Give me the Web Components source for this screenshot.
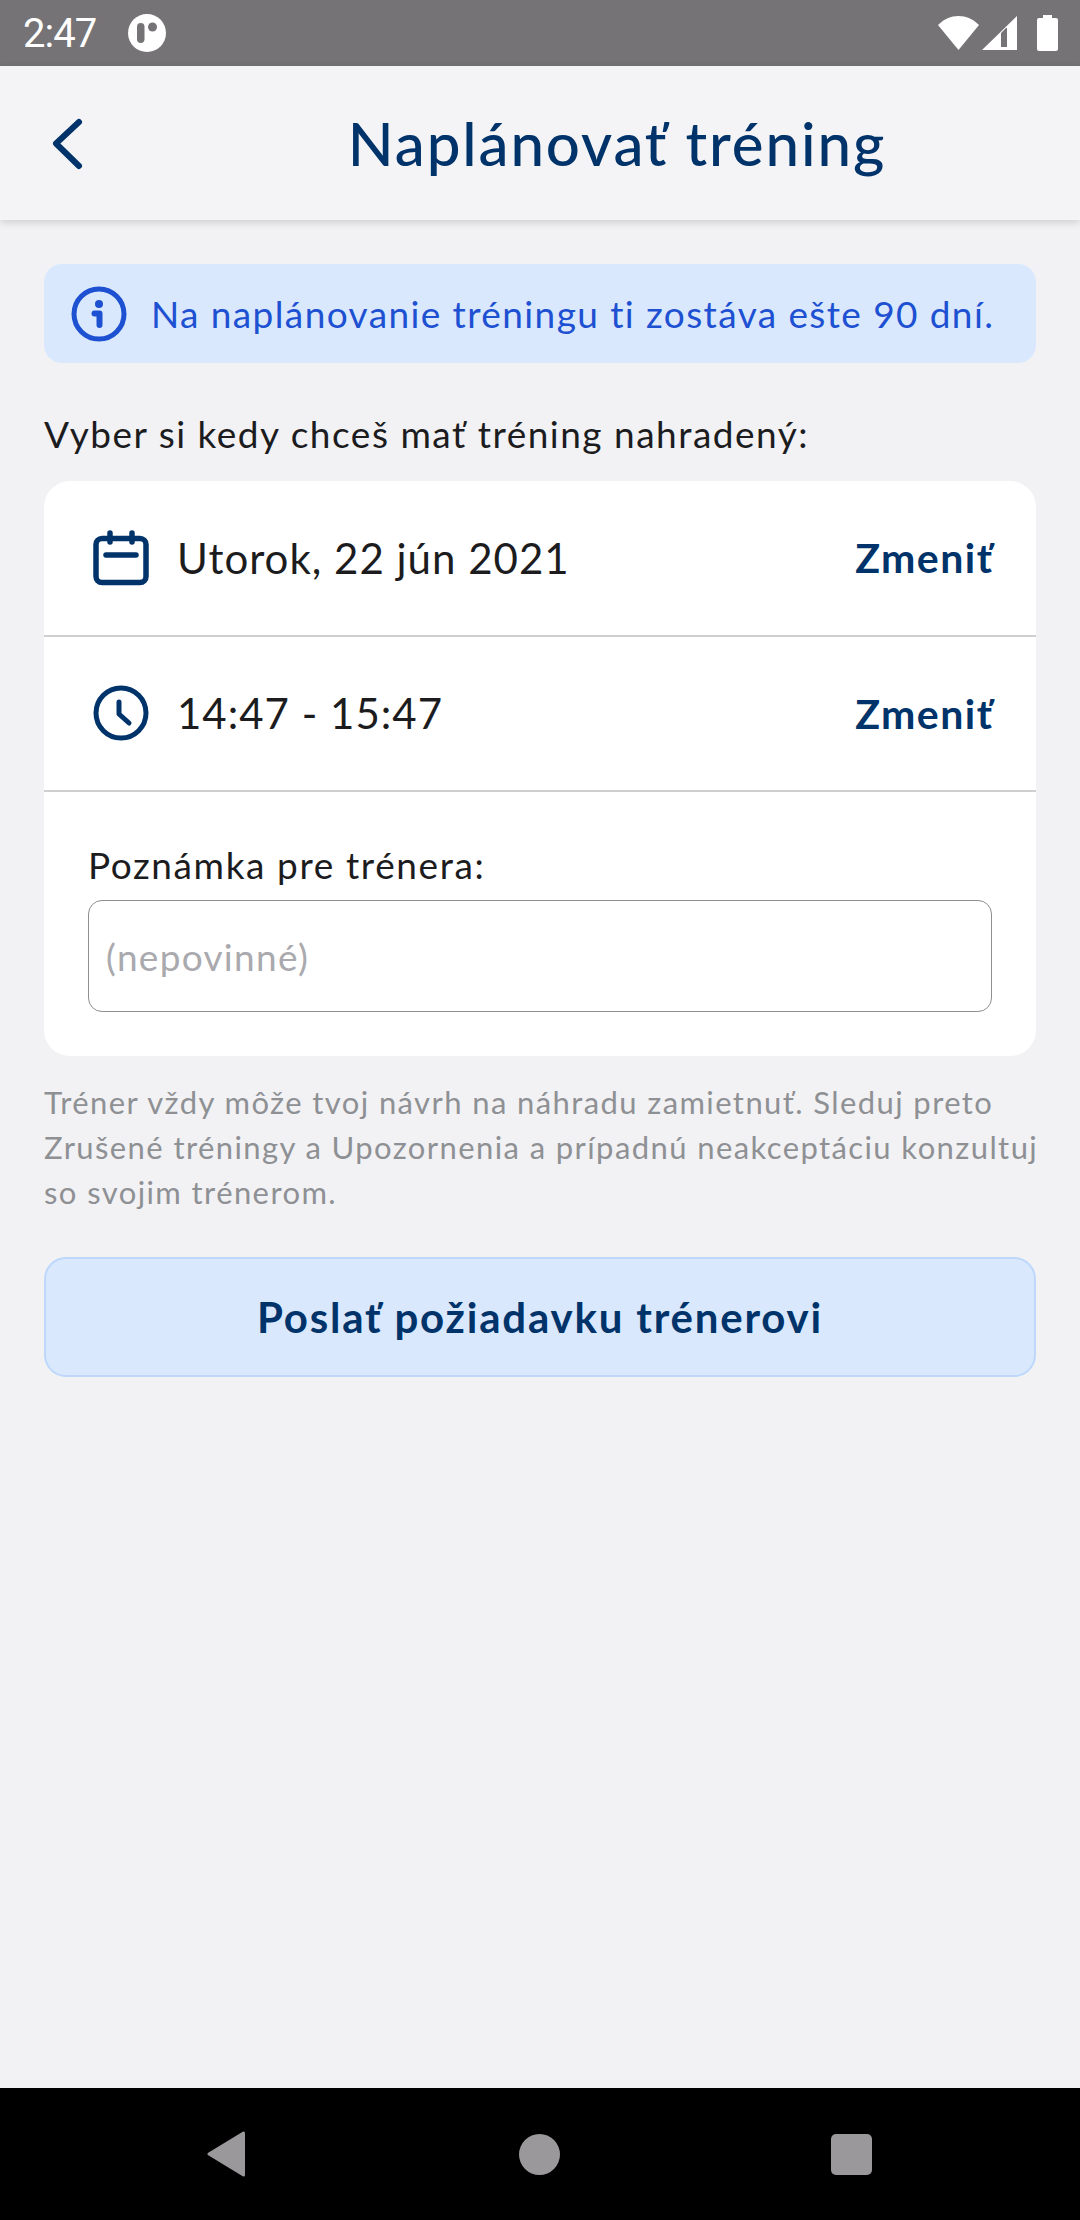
<!DOCTYPE html>
<html lang="sk">
<head>
<meta charset="utf-8">
<title>Naplánovať tréning</title>
<style>
	html, body { margin: 0; height: 100%; }
	body { background: #f2f2f5; font-family: "Lato", "Noto Sans", sans-serif; }
	#app { height: 2220px; display: flex; flex-direction: column; overflow: hidden; }
</style>
</head>
<body>
<div id="app">
	<status-bar></status-bar>
	<app-header title-text="Naplánovať tréning"></app-header>
	<main-content>
		<info-banner>Na naplánovanie tréningu ti zostáva ešte 90 dní.</info-banner>
		<section-label>Vyber si kedy chceš mať tréning nahradený:</section-label>
		<plan-card>
			<plan-row icon="calendar" value="Utorok, 22 jún 2021"></plan-row>
			<plan-row icon="clock" value="14:47 - 15:47"></plan-row>
			<note-field label="Poznámka pre trénera:" placeholder="(nepovinné)"></note-field>
		</plan-card>
		<hint-text>Tréner vždy môže tvoj návrh na náhradu zamietnuť. Sleduj preto Zrušené tréningy a Upozornenia a prípadnú neakceptáciu konzultuj so svojim trénerom.</hint-text>
		<send-button>Poslať požiadavku trénerovi</send-button>
	</main-content>
	<nav-bar></nav-bar>
</div>
<script>
const FONT = `"Lato", "Noto Sans", sans-serif`;

class StatusBar extends HTMLElement {
	constructor() {
		super();
		this.attachShadow({ mode: "open" });
		this.shadowRoot.innerHTML = `
<style>
	:host { display: flex; align-items: center; height: 66px; flex: none; background: #757376; color: #fff; padding: 0 22px 0 23px; box-sizing: border-box; }
	.time { font: 400 40px "Roboto", sans-serif; letter-spacing: -1px; }
	.left { display: flex; align-items: center; gap: 32px; flex: 1; }
	.right { display: flex; align-items: center; }
	svg { display: block; }
	.signal { margin-left: 3px; }
	.battery { margin-left: 20px; }
</style>
<div class="left">
	<span class="time">2:47</span>
	<svg width="38" height="38" viewBox="0 0 38 38"><circle cx="19" cy="19" r="19" fill="#fff"/><rect x="9" y="9" width="7.5" height="20" rx="3.7" fill="#757376"/><circle cx="24.5" cy="13" r="4.5" fill="#757376"/></svg>
</div>
<div class="right">
	<svg width="41" height="34" viewBox="0 0 41 34"><path d="M0 9C6 3 13 0 20.5 0S35 3 41 9L20.5 34z" fill="#fff"/></svg>
	<svg class="signal" width="35" height="34" viewBox="0 0 35 34"><path fill-rule="evenodd" d="M35 0v34H0zM24 12L19 17v14h6V12z" fill="#fff"/></svg>
	<svg class="battery" width="21" height="36" viewBox="0 0 21 36"><path d="M6 0h9v3h4a2 2 0 0 1 2 2v29a2 2 0 0 1-2 2H2a2 2 0 0 1-2-2V5a2 2 0 0 1 2-2h4z" fill="#fff"/></svg>
</div>`;
	}
}

class AppHeader extends HTMLElement {
	constructor() {
		super();
		this.attachShadow({ mode: "open" });
		this.shadowRoot.innerHTML = `
<style>
	:host { display: flex; align-items: center; justify-content: center; position: relative; flex: none; height: 154px; padding-left: 154px; box-sizing: border-box; background: #f4f4f6; box-shadow: 0 2px 8px rgba(0,0,0,.16); color: #00336a; font: 500 60px ${FONT}; letter-spacing: 1.9px; }
	svg { position: absolute; left: 50px; top: 50px; }
</style>
<svg width="36" height="56" viewBox="0 0 36 56"><path d="M29 6L6 27.5 29 50" fill="none" stroke="#00336a" stroke-width="6" stroke-linecap="round" stroke-linejoin="round"/></svg>
<span></span>`;
		this.shadowRoot.querySelector("span").innerHTML = this.getAttribute("title-text");
	}
}

class MainContent extends HTMLElement {
	constructor() {
		super();
		this.attachShadow({ mode: "open" });
		this.shadowRoot.innerHTML = `
<style>
	:host { display: flex; flex-direction: column; flex: 1; padding: 44px 44px 0; box-sizing: border-box; min-height: 0; }
</style>
<slot></slot>`;
	}
}

class InfoBanner extends HTMLElement {
	constructor() {
		super();
		this.attachShadow({ mode: "open" });
		this.shadowRoot.innerHTML = `
<style>
	:host { display: flex; align-items: center; gap: 24px; height: 99px; padding: 0 27px; box-sizing: border-box; background: #d9e8fd; border-radius: 18px; color: #1e50d2; font: 400 37px ${FONT}; letter-spacing: 1.4px; white-space: nowrap; }
	svg { flex: none; }
</style>
<svg width="56" height="56" viewBox="0 0 56 56"><circle cx="28" cy="28" r="25" fill="none" stroke="#1e50d2" stroke-width="5"/><circle cx="28" cy="18" r="4" fill="#1e50d2"/><path d="M23.5 27.5h5V39" fill="none" stroke="#1e50d2" stroke-width="6" stroke-linecap="round" stroke-linejoin="round"/></svg>
<span><slot></slot></span>`;
	}
}

class SectionLabel extends HTMLElement {
	constructor() {
		super();
		this.attachShadow({ mode: "open" });
		this.shadowRoot.innerHTML = `
<style>
	:host { display: block; margin-top: 48px; height: 70px; color: #1c1c1e; font: 400 37px/46px ${FONT}; letter-spacing: 1.5px; white-space: nowrap; }
</style>
<slot></slot>`;
	}
}

class PlanCard extends HTMLElement {
	constructor() {
		super();
		this.attachShadow({ mode: "open" });
		this.shadowRoot.innerHTML = `
<style>
	:host { display: block; background: #fff; border-radius: 26px; overflow: hidden; }
</style>
<slot></slot>`;
	}
}

const ICONS = {
	calendar: `<svg width="56" height="56" viewBox="0 0 56 56"><rect x="3" y="8.5" width="50" height="44" rx="6" fill="none" stroke="#00336a" stroke-width="5.5"/><path d="M17 3v9M39 3v9M13 25h30" stroke="#00336a" stroke-width="5.5" stroke-linecap="round"/></svg>`,
	clock: `<svg width="56" height="56" viewBox="0 0 56 56"><circle cx="28" cy="28" r="25" fill="none" stroke="#00336a" stroke-width="5"/><path d="M26 17v12l10 9" fill="none" stroke="#00336a" stroke-width="5" stroke-linecap="round" stroke-linejoin="round"/></svg>`
};

class PlanRow extends HTMLElement {
	constructor() {
		super();
		this.attachShadow({ mode: "open" });
		this.shadowRoot.innerHTML = `
<style>
	:host { display: flex; align-items: center; height: 155.5px; padding: 0 44px 0 49px; box-sizing: border-box; border-bottom: 2px solid #cfcfd2; font-family: ${FONT}; }
	.icon { flex: none; display: flex; margin-right: 28px; }
	.value { flex: 1; color: #1c1c1e; font-size: 42px; font-weight: 400; letter-spacing: 1px; }
	.action { color: #00336a; font-size: 41px; font-weight: 700; letter-spacing: 1.5px; margin-right: -1.5px; }
</style>
<span class="icon"></span>
<span class="value"></span>
<span class="action">Zmeniť</span>`;
		this.shadowRoot.querySelector(".icon").innerHTML = ICONS[this.getAttribute("icon")];
		this.shadowRoot.querySelector(".value").innerHTML = this.getAttribute("value");
	}
}

class NoteField extends HTMLElement {
	constructor() {
		super();
		this.attachShadow({ mode: "open" });
		this.shadowRoot.innerHTML = `
<style>
	:host { display: block; padding: 50px 44px 44px; font-family: ${FONT}; }
	label { display: block; color: #1c1c1e; font-size: 37px; line-height: 46px; letter-spacing: 1.6px; margin-bottom: 12px; }
	input { display: block; width: 100%; height: 112px; box-sizing: border-box; padding: 0 17px; border: 1.5px solid #8e8e93; border-radius: 14px; font: 400 37px ${FONT}; letter-spacing: 1.3px; background: #fff; outline: none; }
	input::placeholder { color: #a9a9ae; opacity: 1; }
</style>
<label></label>
<input type="text">`;
		this.shadowRoot.querySelector("label").innerHTML = this.getAttribute("label");
		this.shadowRoot.querySelector("input").placeholder = this.getAttribute("placeholder");
	}
}

class HintText extends HTMLElement {
	constructor() {
		super();
		this.attachShadow({ mode: "open" });
		this.shadowRoot.innerHTML = `
<style>
	:host { display: block; margin-top: 24px; color: #8e9094; font: 400 31px/45px ${FONT}; letter-spacing: 1.4px; margin-right: -4px; }
</style>
<slot></slot>`;
	}
}

class SendButton extends HTMLElement {
	constructor() {
		super();
		this.attachShadow({ mode: "open" });
		this.shadowRoot.innerHTML = `
<style>
	:host { display: flex; align-items: center; justify-content: center; margin-top: 42px; height: 120px; box-sizing: border-box; background: #d9e8fd; border: 2px solid #bdd8fb; border-radius: 22px; color: #00336a; font: 700 42px ${FONT}; letter-spacing: 1.8px; }
</style>
<slot></slot>`;
	}
}

class NavBar extends HTMLElement {
	constructor() {
		super();
		this.attachShadow({ mode: "open" });
		this.shadowRoot.innerHTML = `
<style>
	:host { display: grid; grid-template-columns: 1fr 41px 1fr; align-items: center; flex: none; height: 132px; padding: 0 208px 0 207px; box-sizing: border-box; background: #000; }
	svg { display: block; }
	.end { justify-self: end; }
</style>
<svg width="38" height="46" viewBox="0 0 38 46"><path d="M36.5 2v42L2 23z" fill="#9a989b" stroke="#9a989b" stroke-width="3" stroke-linejoin="round"/></svg>
<svg width="41" height="41" viewBox="0 0 41 41"><circle cx="20.5" cy="20.5" r="20.5" fill="#9a989b"/></svg>
<svg class="end" width="41" height="41" viewBox="0 0 41 41"><rect width="41" height="41" rx="5" fill="#9a989b"/></svg>`;
	}
}

customElements.define("status-bar", StatusBar);
customElements.define("app-header", AppHeader);
customElements.define("main-content", MainContent);
customElements.define("info-banner", InfoBanner);
customElements.define("section-label", SectionLabel);
customElements.define("plan-card", PlanCard);
customElements.define("plan-row", PlanRow);
customElements.define("note-field", NoteField);
customElements.define("hint-text", HintText);
customElements.define("send-button", SendButton);
customElements.define("nav-bar", NavBar);
</script>
</body>
</html>
